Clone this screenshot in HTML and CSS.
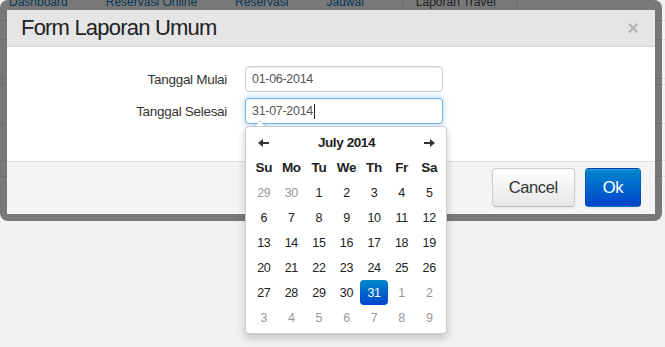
FILE: index.html
```html
<!DOCTYPE html>
<html lang="en">
<head>
    <meta charset="UTF-8">
    <title>Form Laporan Umum</title>
    <link rel="stylesheet" href="styles.css">
</head>
<body>
    <div class="page">
        <ul class="nav">
            <li><a href="#">Dashboard</a></li>
            <li><a href="#">Reservasi Online</a></li>
            <li><a href="#">Reservasi</a></li>
            <li><a href="#">Jadwal</a></li>
            <li class="active"><a href="#">Laporan Travel</a></li>
        </ul>
        <div class="rows">
            <div class="row row-a"></div>
            <div class="row row-b"></div>
            <div class="row row-c"></div>
            <div class="row row-b"></div>
            <div class="row row-d"></div>
            <div class="row row-e"></div>
        </div>
    </div>

    <div class="modal">
        <div class="modal-header">
            <h3>Form Laporan Umum</h3>
            <span class="close">&times;</span>
        </div>
        <div class="modal-body">
            <form class="form-grid">
                <label>Tanggal Mulai</label>
                <div class="field">
                    <input type="text" value="01-06-2014">
                </div>
                <label>Tanggal Selesai</label>
                <div class="field">
                    <input type="text" class="focused" value="31-07-2014">
                    <span class="text-caret"></span>
                    <div class="datepicker">
                        <div class="dp-grid">
                            <span class="dp-arrow">
                                <svg width="11" height="8" viewBox="0 0 11 8"><path d="M0 4 L5 0 L5 3 L11 3 L11 5 L5 5 L5 8 Z" fill="#333"/></svg>
                            </span>
                            <span class="dp-title">July 2014</span>
                            <span class="dp-arrow">
                                <svg width="11" height="8" viewBox="0 0 11 8"><path d="M11 4 L6 0 L6 3 L0 3 L0 5 L6 5 L6 8 Z" fill="#333"/></svg>
                            </span>

                            <span class="dow">Su</span><span class="dow">Mo</span><span class="dow">Tu</span><span class="dow">We</span><span class="dow">Th</span><span class="dow">Fr</span><span class="dow">Sa</span>

                            <span class="day old">29</span><span class="day old">30</span><span class="day">1</span><span class="day">2</span><span class="day">3</span><span class="day">4</span><span class="day">5</span>
                            <span class="day">6</span><span class="day">7</span><span class="day">8</span><span class="day">9</span><span class="day">10</span><span class="day">11</span><span class="day">12</span>
                            <span class="day">13</span><span class="day">14</span><span class="day">15</span><span class="day">16</span><span class="day">17</span><span class="day">18</span><span class="day">19</span>
                            <span class="day">20</span><span class="day">21</span><span class="day">22</span><span class="day">23</span><span class="day">24</span><span class="day">25</span><span class="day">26</span>
                            <span class="day">27</span><span class="day">28</span><span class="day">29</span><span class="day">30</span><span class="day active">31</span><span class="day new">1</span><span class="day new">2</span>
                            <span class="day new">3</span><span class="day new">4</span><span class="day new">5</span><span class="day new">6</span><span class="day new">7</span><span class="day new">8</span><span class="day new">9</span>
                        </div>
                    </div>
                </div>
            </form>
        </div>
        <div class="modal-footer">
            <button class="btn">Cancel</button>
            <button class="btn btn-primary">Ok</button>
        </div>
    </div>
</body>
</html>
```

FILE: styles.css
```css
body {
    margin: 0;
    background: #f1f1f1;
    font-family: 'Liberation Sans', Arial, sans-serif;
    color: #333;
    overflow: hidden;
    height: 347px;
    position: relative;
}

/* page behind the dialog */
.nav {
    display: flex;
    gap: 38px;
    list-style: none;
    margin: -8px 0 0 0;
    padding: 0 0 0 9px;
    height: 28px;
    border-bottom: 1px solid #d6d6d6;
    font-size: 12px;
    line-height: 20px;
}
.nav a {
    color: #0a6fb0;
    text-decoration: none;
}
.nav .active {
    border-left: 1px solid #d6d6d6;
    border-right: 1px solid #d6d6d6;
    padding: 0 20px 0 13px;
}
.nav .active a {
    color: #444;
}
.row {
    border-bottom: 1px solid #dcdcdc;
}
.row-a { height: 18px; }
.row-b { height: 38px; }
.row-c { height: 5px; }
.row-d { height: 36px; }
.row-e { height: 15px; }

/* dialog */
.modal {
    position: absolute;
    top: 0;
    left: 0;
    width: 648px;
    border-style: solid;
    border-width: 10px 7px 7px 7px;
    border-color: rgba(0, 0, 0, 0.5);
    border-radius: 8px;
    background: #fff;
    background-clip: padding-box;
}
.modal-header {
    height: 36px;
    background: #e5e5e5;
    border-bottom: 1px solid #d8d8d8;
    display: flex;
    align-items: center;
    justify-content: space-between;
    padding: 0 16px 0 14px;
}
.modal-header h3 {
    margin: 0;
    font-size: 22px;
    font-weight: normal;
    letter-spacing: -0.8px;
    color: #222;
    line-height: 1;
}
.close {
    font-size: 20px;
    font-weight: bold;
    color: #000;
    opacity: 0.2;
    line-height: 1;
}
.modal-body {
    height: 95px;
    padding: 19px 0 0 0;
}
.form-grid {
    display: grid;
    grid-template-columns: 220px 198px;
    column-gap: 18px;
    row-gap: 6px;
    align-items: center;
    margin: 0;
}
.form-grid label {
    text-align: right;
    font-size: 13.5px;
    letter-spacing: -0.3px;
    color: #333;
}
.field {
    position: relative;
}
.field input {
    display: block;
    box-sizing: border-box;
    width: 198px;
    height: 26px;
    margin: 0;
    padding: 0 6px;
    border: 1px solid #ccc;
    border-radius: 4px;
    font-family: inherit;
    font-size: 12.5px;
    letter-spacing: -0.3px;
    color: #555;
    box-shadow: inset 0 1px 1px rgba(0, 0, 0, 0.075);
    outline: none;
}
.field input.focused {
    border-color: rgba(82, 168, 236, 0.8);
    box-shadow: inset 0 1px 1px rgba(0, 0, 0, 0.075), 0 0 6px rgba(82, 168, 236, 0.5);
}
.text-caret {
    position: absolute;
    left: 69px;
    top: 6px;
    width: 1px;
    height: 15px;
    background: #222;
}

/* datepicker dropdown */
.datepicker {
    position: absolute;
    top: 28px;
    left: 0;
    width: 193px;
    padding: 3px 3px 3px 4px;
    background: #fff;
    border: 1px solid rgba(0, 0, 0, 0.2);
    border-radius: 4px;
    box-shadow: 0 4px 8px rgba(0, 0, 0, 0.2);
    z-index: 5;
}
.datepicker::before {
    content: '';
    position: absolute;
    top: -7px;
    left: 8px;
    border-left: 6px solid transparent;
    border-right: 6px solid transparent;
    border-bottom: 6px solid rgba(0, 0, 0, 0.2);
}
.datepicker::after {
    content: '';
    position: absolute;
    top: -6px;
    left: 9px;
    border-left: 5px solid transparent;
    border-right: 5px solid transparent;
    border-bottom: 5px solid #fff;
}
.dp-grid {
    display: grid;
    grid-template-columns: repeat(7, 1fr);
    grid-auto-rows: 25px;
    font-size: 12.5px;
    letter-spacing: -0.3px;
    color: #222;
}
.dp-grid span {
    display: flex;
    align-items: center;
    justify-content: center;
}
.dp-title {
    grid-column: span 5;
    font-weight: bold;
    font-size: 13.5px;
    letter-spacing: -0.4px;
}
.dow {
    font-weight: bold;
    font-size: 13.5px;
}
.day.old,
.day.new {
    color: #999;
}
.day.active {
    color: #fff;
    background: linear-gradient(#0088cc, #0044cc);
    border-radius: 4px;
}

.modal-footer {
    border-top: 1px solid #ddd;
    background: #f4f4f4;
    padding: 6px 14px 7px 14px;
    display: flex;
    justify-content: flex-end;
    gap: 10px;
}
.btn {
    height: 39px;
    padding: 0 16px;
    border: 1px solid #ccc;
    border-bottom-color: #b8b8b8;
    border-radius: 4px;
    background: linear-gradient(#ffffff, #e6e6e6);
    font-family: inherit;
    font-size: 16.5px;
    letter-spacing: -0.4px;
    color: #333;
    box-shadow: inset 0 1px 0 rgba(255, 255, 255, 0.2), 0 1px 2px rgba(0, 0, 0, 0.05);
}
.btn-primary {
    padding: 0 17px;
    color: #fff;
    border-color: rgba(0, 0, 0, 0.1);
    background: linear-gradient(#0088cc, #0044cc);
}
```
